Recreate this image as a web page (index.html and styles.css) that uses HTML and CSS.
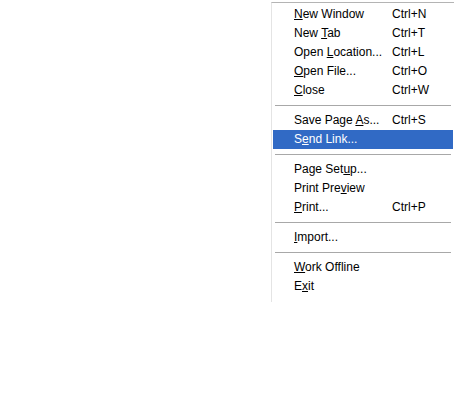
FILE: index.html
```html
<!DOCTYPE html>
<html>
<head>
<meta charset="utf-8">
<link rel="stylesheet" href="styles.css">
</head>
<body>
<div class="menu">
  <div class="item"><span class="label"><u>N</u>ew Window</span><span class="key">Ctrl+N</span></div>
  <div class="item"><span class="label">New <u>T</u>ab</span><span class="key">Ctrl+T</span></div>
  <div class="item"><span class="label">Open <u>L</u>ocation...</span><span class="key">Ctrl+L</span></div>
  <div class="item"><span class="label"><u>O</u>pen File...</span><span class="key">Ctrl+O</span></div>
  <div class="item"><span class="label"><u>C</u>lose</span><span class="key">Ctrl+W</span></div>
  <div class="sep"></div>
  <div class="item"><span class="label">Save Page <u>A</u>s...</span><span class="key">Ctrl+S</span></div>
  <div class="item active"><span class="label">S<u>e</u>nd Link...</span><span class="key"></span></div>
  <div class="sep"></div>
  <div class="item"><span class="label">Page Set<u>u</u>p...</span><span class="key"></span></div>
  <div class="item"><span class="label">Print Pre<u>v</u>iew</span><span class="key"></span></div>
  <div class="item"><span class="label"><u>P</u>rint...</span><span class="key">Ctrl+P</span></div>
  <div class="sep"></div>
  <div class="item"><span class="label"><u>I</u>mport...</span><span class="key"></span></div>
  <div class="sep"></div>
  <div class="item"><span class="label"><u>W</u>ork Offline</span><span class="key"></span></div>
  <div class="item"><span class="label">E<u>x</u>it</span><span class="key"></span></div>
</div>
</body>
</html>
```

FILE: styles.css
```css
html, body {
  margin: 0;
  padding: 0;
  background: #ffffff;
}
body {
  padding-top: 2px;
  font-family: "Liberation Sans", Arial, sans-serif;
  font-size: 12px;
  color: #000;
}
.menu {
  margin-left: 271px;
  width: 180px;
  border-top: 1px solid #b4b4b4;
  border-left: 1px solid #e4e4e4;
  border-right: 1px solid #a4a4a4;
  padding: 2px 1px 6px 1px;
  background: #fff;
}
.item {
  display: grid;
  grid-template-columns: 98px 1fr;
  padding-left: 21px;
  height: 19px;
  line-height: 19px;
  white-space: nowrap;
}
.item.active {
  background: #316ac5;
  color: #fff;
}
.sep {
  margin: 5px 2px 5px 2px;
  border-top: 1px solid #a8a8a8;
}
u {
  text-decoration: underline;
  text-underline-offset: 1px;
}
```
